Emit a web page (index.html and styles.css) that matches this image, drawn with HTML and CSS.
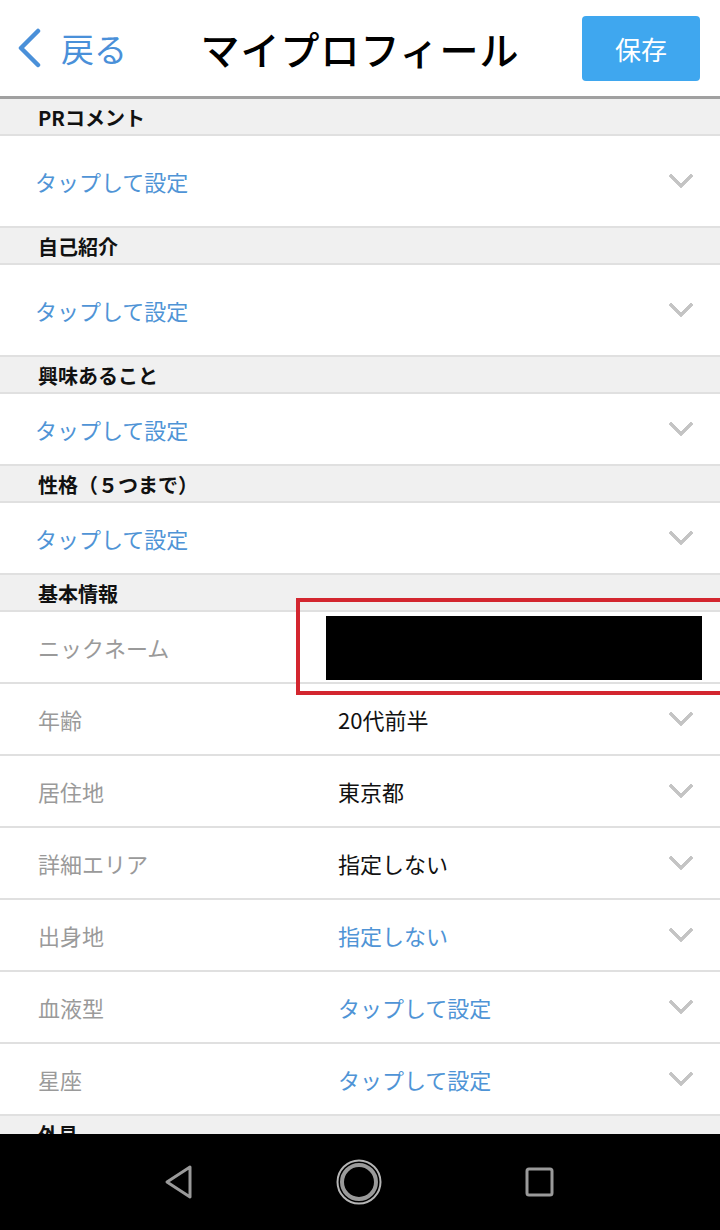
FILE: index.html
```html
<!DOCTYPE html>
<html>
<head>
  <meta charset="utf-8">
  <title>マイプロフィール</title>
  <link rel="stylesheet" href="styles.css">
</head>
<body>
  <div class="header">
    <a class="back" href="#">
      <svg width="30" height="40" viewBox="0 0 30 40"><path d="M24 3 L7 20 L24 37" fill="none" stroke="#4a90d9" stroke-width="4.5" stroke-linecap="round" stroke-linejoin="round"/></svg>
      <span>戻る</span>
    </a>
    <h1>マイプロフィール</h1>
    <button class="save">保存</button>
  </div>

  <div class="list">
    <div class="section">PRコメント</div>
    <div class="row tall">
      <span class="link">タップして設定</span>
      <span class="chev"></span>
    </div>

    <div class="section">自己紹介</div>
    <div class="row tall">
      <span class="link">タップして設定</span>
      <span class="chev"></span>
    </div>

    <div class="section">興味あること</div>
    <div class="row">
      <span class="link">タップして設定</span>
      <span class="chev"></span>
    </div>

    <div class="section">性格（５つまで）</div>
    <div class="row">
      <span class="link">タップして設定</span>
      <span class="chev"></span>
    </div>

    <div class="section">基本情報</div>
    <div class="row field nick">
      <span class="label">ニックネーム</span>
      <span class="value"></span>
      <div class="redact"></div>
      <div class="mark"></div>
    </div>
    <div class="row field">
      <span class="label">年齢</span>
      <span class="value">20代前半</span>
      <span class="chev"></span>
    </div>
    <div class="row field">
      <span class="label">居住地</span>
      <span class="value">東京都</span>
      <span class="chev"></span>
    </div>
    <div class="row field">
      <span class="label">詳細エリア</span>
      <span class="value">指定しない</span>
      <span class="chev"></span>
    </div>
    <div class="row field">
      <span class="label">出身地</span>
      <span class="value link">指定しない</span>
      <span class="chev"></span>
    </div>
    <div class="row field">
      <span class="label">血液型</span>
      <span class="value link">タップして設定</span>
      <span class="chev"></span>
    </div>
    <div class="row field">
      <span class="label">星座</span>
      <span class="value link">タップして設定</span>
      <span class="chev"></span>
    </div>

    <div class="section">外見</div>
    <div class="row tall"></div>
  </div>

  <div class="navbar">
    <svg width="40" height="40" viewBox="0 0 40 40"><path d="M32 5 L9 20 L32 35 Z" fill="none" stroke="#9a9a9a" stroke-width="3" stroke-linejoin="round"/></svg>
    <svg width="50" height="50" viewBox="0 0 50 50"><circle cx="25" cy="25" r="21.5" fill="none" stroke="#b5b5b5" stroke-width="2"/><circle cx="25" cy="25" r="17" fill="none" stroke="#9a9a9a" stroke-width="4"/></svg>
    <svg width="40" height="40" viewBox="0 0 40 40"><rect x="7" y="7" width="25" height="26" rx="2" fill="none" stroke="#9a9a9a" stroke-width="3"/></svg>
  </div>
</body>
</html>
```

FILE: styles.css
```css
body {
  margin: 0;
  font-family: "Noto Sans CJK JP", "Noto Sans", sans-serif;
  background: #fff;
  color: #111;
}

.header {
  height: 96px;
  display: flex;
  align-items: center;
  justify-content: space-between;
  padding: 0 20px 0 14px;
  border-bottom: 3px solid #a0a0a0;
}

.back {
  display: flex;
  align-items: center;
  gap: 17px;
  text-decoration: none;
  color: #4a90d9;
  font-size: 33px;
  width: 150px;
}

.header h1 {
  margin: 0 26px 0 0;
  font-size: 39px;
  font-weight: 500;
  letter-spacing: 1px;
  color: #000;
}

.save {
  width: 118px;
  height: 65px;
  border: none;
  border-radius: 4px;
  background: #3fa7ef;
  color: #fff;
  font-family: inherit;
  font-size: 26px;
}

.section {
  height: 35px;
  line-height: 37px;
  padding-left: 38px;
  background: #f0f0f0;
  border-bottom: 2px solid #e0e0e0;
  font-size: 20px;
  font-weight: bold;
}

.row {
  position: relative;
  height: 70px;
  display: flex;
  align-items: center;
  padding-left: 35px;
  border-bottom: 2px solid #e0e0e0;
  font-size: 22px;
}

.row.tall {
  height: 90px;
}

.link {
  color: #4f94d6;
}

.field {
  padding-left: 38px;
}

.label {
  width: 300px;
  color: #9a9a9a;
}

.value {
  color: #111;
}

.value.link {
  color: #4f94d6;
}

.chev {
  margin-left: auto;
  margin-right: 30px;
  width: 14px;
  height: 14px;
  border-right: 4px solid #c4c4c4;
  border-bottom: 4px solid #c4c4c4;
  border-radius: 1px;
  transform: translateY(-5px) rotate(45deg);
}

.redact {
  position: absolute;
  left: 326px;
  top: 4px;
  width: 376px;
  height: 64px;
  background: #000;
}

.mark {
  position: absolute;
  left: 296px;
  top: -14px;
  right: -10px;
  height: 89px;
  border: 4px solid #d3262f;
}

.navbar {
  position: fixed;
  left: 0;
  right: 0;
  bottom: 0;
  height: 96px;
  background: #000;
  display: flex;
  align-items: center;
  justify-content: space-between;
  padding: 0 160px 0 158px;
}
```
